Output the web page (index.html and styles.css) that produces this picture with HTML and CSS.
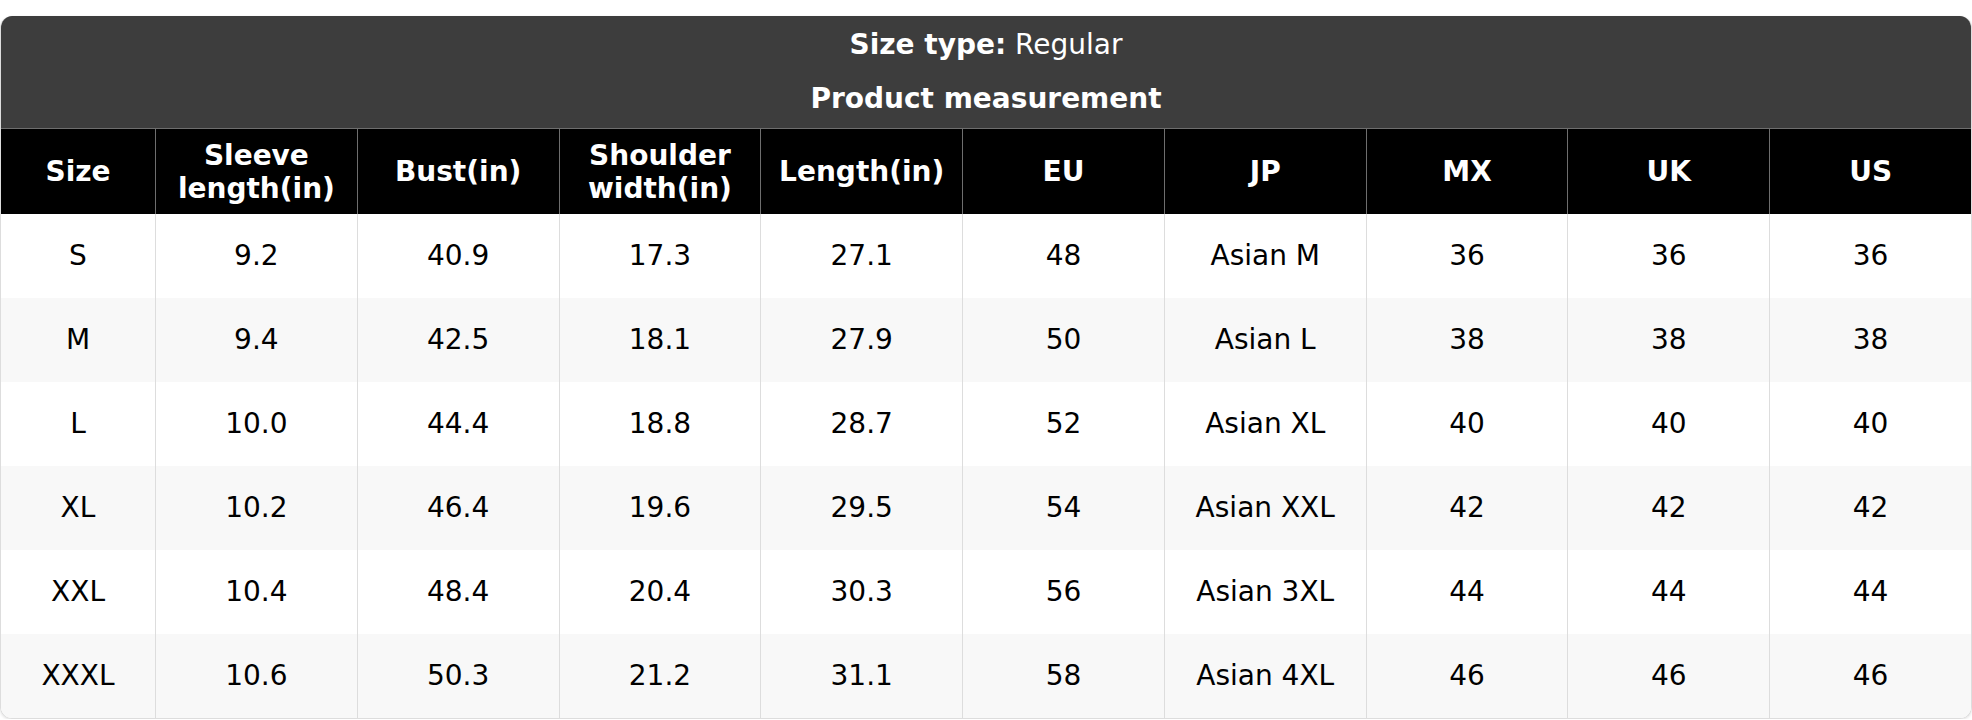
FILE: index.html
```html
<!DOCTYPE html>
<html lang="en">
<head>
<meta charset="utf-8">
<title>Size chart</title>
<link rel="stylesheet" href="styles.css">
</head>
<body>
<div class="chart">
  <div class="caption">
    <div class="caption-line"><b>Size type:</b> Regular</div>
    <div class="caption-line"><b>Product measurement</b></div>
  </div>
  <div class="row head">
    <div class="cell">Size</div>
    <div class="cell">Sleeve<br>length(in)</div>
    <div class="cell">Bust(in)</div>
    <div class="cell">Shoulder<br>width(in)</div>
    <div class="cell">Length(in)</div>
    <div class="cell">EU</div>
    <div class="cell">JP</div>
    <div class="cell">MX</div>
    <div class="cell">UK</div>
    <div class="cell">US</div>
  </div>
  <div class="row">
    <div class="cell">S</div><div class="cell">9.2</div><div class="cell">40.9</div><div class="cell">17.3</div><div class="cell">27.1</div><div class="cell">48</div><div class="cell">Asian M</div><div class="cell">36</div><div class="cell">36</div><div class="cell">36</div>
  </div>
  <div class="row alt">
    <div class="cell">M</div><div class="cell">9.4</div><div class="cell">42.5</div><div class="cell">18.1</div><div class="cell">27.9</div><div class="cell">50</div><div class="cell">Asian L</div><div class="cell">38</div><div class="cell">38</div><div class="cell">38</div>
  </div>
  <div class="row">
    <div class="cell">L</div><div class="cell">10.0</div><div class="cell">44.4</div><div class="cell">18.8</div><div class="cell">28.7</div><div class="cell">52</div><div class="cell">Asian XL</div><div class="cell">40</div><div class="cell">40</div><div class="cell">40</div>
  </div>
  <div class="row alt">
    <div class="cell">XL</div><div class="cell">10.2</div><div class="cell">46.4</div><div class="cell">19.6</div><div class="cell">29.5</div><div class="cell">54</div><div class="cell">Asian XXL</div><div class="cell">42</div><div class="cell">42</div><div class="cell">42</div>
  </div>
  <div class="row">
    <div class="cell">XXL</div><div class="cell">10.4</div><div class="cell">48.4</div><div class="cell">20.4</div><div class="cell">30.3</div><div class="cell">56</div><div class="cell">Asian 3XL</div><div class="cell">44</div><div class="cell">44</div><div class="cell">44</div>
  </div>
  <div class="row alt">
    <div class="cell">XXXL</div><div class="cell">10.6</div><div class="cell">50.3</div><div class="cell">21.2</div><div class="cell">31.1</div><div class="cell">58</div><div class="cell">Asian 4XL</div><div class="cell">46</div><div class="cell">46</div><div class="cell">46</div>
  </div>
</div>
</body>
</html>
```
FILE: styles.css
```css
html, body {
  margin: 0;
  padding: 0;
  background: #ffffff;
}

body {
  font-family: "DejaVu Sans", Verdana, sans-serif;
  font-size: 28px;
  color: #000000;
  padding-top: 16px;
}

.chart {
  border: 1px solid #dddddd;
  border-top: none;
  border-radius: 12px;
  overflow: hidden;
  box-shadow: 0 1px 3px rgba(0, 0, 0, 0.12);
}

.caption {
  background: #3d3d3d;
  color: #ffffff;
  text-align: center;
}

.caption-line {
  height: 56px;
  line-height: 58px;
}

.caption-line + .caption-line {
  line-height: 54px;
}

.row {
  display: grid;
  grid-template-columns: 154px repeat(9, 1fr);
  height: 84px;
  background: #ffffff;
}

.row.alt {
  background: #f8f8f8;
}

.cell {
  display: flex;
  align-items: center;
  justify-content: center;
  text-align: center;
  line-height: 1.15;
}

.cell + .cell {
  border-left: 1px solid #dddddd;
}

.row.head {
  background: #000000;
  color: #ffffff;
  font-weight: bold;
  height: 85px;
  border-top: 1px solid #6e6e6e;
}

.row.head .cell {
  padding-top: 2px;
}

.row.head .cell + .cell {
  border-left-color: #6e6e6e;
}
```
